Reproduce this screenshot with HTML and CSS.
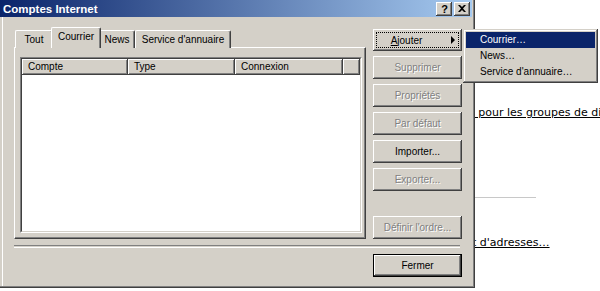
FILE: index.html
```html
<!DOCTYPE html>
<html lang="fr">
<head>
    <meta charset="UTF-8">
    <title>Comptes Internet</title>
    <link rel="stylesheet" href="styles.css">
</head>
<body>
    <!-- Page behind the dialog -->
    <div class="page">
        <p class="page-line first"><span class="link">e pour les groupes de di</span></p>
        <hr class="page-rule">
        <p class="page-line last"><span class="link">t d'adresses…</span></p>
    </div>

    <!-- The dialog window -->
    <div class="window">
        <div class="titlebar">
            <span class="title">Comptes Internet</span>
            <div class="caption-buttons">
                <span class="caption-btn help">?</span>
                <span class="caption-btn close">
                    <svg width="8" height="7" viewBox="0 0 8 7"><path d="M0 0h2l2 2 2-2h2L5 3.5 8 7H6L4 5 2 7H0l3-3.5z" fill="#000"/></svg>
                </span>
            </div>
        </div>

        <div class="client">
            <div class="main-row">
                <div class="tabs">
                    <div class="tab-strip">
                        <span class="tab tab-tout">Tout</span>
                        <span class="tab tab-courrier active">Courrier</span>
                        <span class="tab tab-news">News</span>
                        <span class="tab tab-service">Service d'annuaire</span>
                    </div>
                    <div class="tab-panel">
                        <div class="list">
                            <div class="list-inner">
                                <div class="list-header">
                                    <span class="col col-compte">Compte</span>
                                    <span class="col col-type">Type</span>
                                    <span class="col col-connexion">Connexion</span>
                                    <span class="col col-filler"></span>
                                </div>
                            </div>
                        </div>
                    </div>
                </div>

                <div class="actions">
                    <button class="btn btn-ajouter"><span class="focus-rect"><span class="btn-label"><u>A</u>jouter</span><span class="arrow"></span></span></button>
                    <button class="btn disabled">Supprimer</button>
                    <button class="btn disabled">Propriétés</button>
                    <button class="btn disabled">Par défaut</button>
                    <button class="btn">Importer...</button>
                    <button class="btn disabled">Exporter...</button>
                    <button class="btn disabled btn-bottom">Définir l'ordre...</button>
                </div>
            </div>

            <div class="separator"></div>

            <div class="footer">
                <button class="btn btn-default">Fermer</button>
            </div>
        </div>
    </div>

    <!-- Popup menu opened from "Ajouter" -->
    <div class="menu">
        <div class="menu-item selected">Courrier…</div>
        <div class="menu-item">News…</div>
        <div class="menu-item">Service d'annuaire…</div>
    </div>
</body>
</html>
```

FILE: styles.css
```css
/* Page */
body {
    margin: 0;
    width: 600px;
    height: 291px;
    overflow: hidden;
    background: #fff;
    font-family: "Liberation Sans", Arial, sans-serif;
    font-size: 10px;
    position: relative;
}

/* Web page behind the dialog */
.page {
    padding-top: 106px;
    font-family: "DejaVu Sans", Verdana, sans-serif;
    font-size: 11px;
    line-height: 13px;
    color: #000;
}

.page-line {
    margin: 0;
    white-space: nowrap;
}

.page-line.first {
    padding-left: 468px;
}

.page-line.last {
    margin-top: 38px;
    padding-left: 472px;
}

.link {
    text-decoration: underline;
}

.page-rule {
    margin: 78px 0 0 440px;
    width: 96px;
    height: 0;
    border: none;
    border-top: 1px solid #c8c8c8;
}

/* Dialog window */
.window {
    position: absolute;
    left: 0;
    top: 0;
    width: 475px;
    height: 288px;
    box-sizing: border-box;
    background: #d4d0c8;
    display: flex;
    flex-direction: column;
    box-shadow: inset -1px -1px #404040, inset -2px -2px #808080, inset 2px 0 #d4d0c8, inset 3px 0 #fff;
}

.titlebar {
    height: 18px;
    margin-right: 3px;
    padding: 0 2px 0 3px;
    display: flex;
    align-items: center;
    justify-content: space-between;
    background: linear-gradient(to right, #0a246a, #a6caf0);
}

.title {
    color: #fff;
    font-weight: bold;
    font-size: 11.5px;
}

.caption-buttons {
    display: flex;
    gap: 2px;
}

.caption-btn {
    width: 16px;
    height: 14px;
    box-sizing: border-box;
    display: flex;
    align-items: center;
    justify-content: center;
    background: #d4d0c8;
    font-weight: bold;
    font-size: 11px;
    box-shadow: inset -1px -1px #404040, inset 1px 1px #fff, inset -2px -2px #808080;
}

.caption-btn.help {
    padding-left: 1px;
}

.client {
    flex: 1;
    padding: 11px 13px 11px 14px;
    display: flex;
    flex-direction: column;
}

.main-row {
    height: 211px;
    display: flex;
    gap: 7px;
}

/* Tab control */
.tabs {
    width: 352px;
    display: flex;
    flex-direction: column;
}

.tab-strip {
    height: 20px;
    display: flex;
    align-items: flex-end;
    padding-left: 1px;
    position: relative;
    z-index: 1;
    margin-bottom: -1px;
}

.tab {
    height: 18px;
    box-sizing: border-box;
    padding: 3px 0 0;
    text-align: center;
    background: #d4d0c8;
    border-top: 1px solid #fff;
    border-left: 1px solid #fff;
    border-right: 1px solid #404040;
    border-top-left-radius: 2px;
    border-top-right-radius: 2px;
    box-shadow: inset -1px 0 #808080;
}

.tab-tout { width: 38px; }
.tab-courrier { width: 46px; }
.tab-news { width: 36px; }
.tab-service { width: 96px; }

.tab.active {
    height: 21px;
    width: 50px;
    margin: 0 -2px;
    padding-top: 3px;
    position: relative;
    z-index: 2;
}

.tab-panel {
    flex: 1;
    padding: 9px 3px 5px 5px;
    border-top: 1px solid #fff;
    border-left: 1px solid #fff;
    border-right: 1px solid #404040;
    border-bottom: 1px solid #404040;
    box-shadow: inset -1px -1px #808080;
    display: flex;
}

/* List view */
.list {
    flex: 1;
    border: 1px solid;
    border-color: #808080 #fff #fff #808080;
    display: flex;
}

.list-inner {
    flex: 1;
    background: #fff;
    border: 1px solid;
    border-color: #404040 #d4d0c8 #d4d0c8 #404040;
}

.list-header {
    height: 16px;
    display: flex;
}

.col {
    box-sizing: border-box;
    padding-left: 6px;
    line-height: 16px;
    background: #d4d0c8;
    box-shadow: inset -1px -1px #404040, inset 1px 1px #fff, inset -2px -2px #808080;
}

.col-compte { width: 106px; }
.col-type { width: 107px; }
.col-connexion { width: 108px; }
.col-filler { flex: 1; }

/* Buttons */
.actions {
    width: 89px;
    display: flex;
    flex-direction: column;
    gap: 5px;
}

.btn {
    width: 89px;
    height: 23px;
    padding: 0;
    border: none;
    background: #d4d0c8;
    font-family: "Liberation Sans", Arial, sans-serif;
    font-size: 10px;
    color: #000;
    box-shadow: inset -1px -1px #404040, inset 1px 1px #fff, inset -2px -2px #808080;
}

.btn.disabled {
    color: #808080;
    text-shadow: 1px 1px #fff;
}

.btn-bottom {
    margin-top: auto;
}

.btn-ajouter {
    height: 22px;
    margin-top: 1px;
    padding: 3px;
}

.focus-rect {
    height: 100%;
    box-sizing: border-box;
    display: flex;
    align-items: center;
    outline: 1px dotted #000;
    outline-offset: -1px;
}

.btn-label {
    flex: 1;
    text-align: center;
    padding-right: 14px;
}

.arrow {
    width: 0;
    height: 0;
    margin-right: 4px;
    border-left: 4px solid #000;
    border-top: 4px solid transparent;
    border-bottom: 4px solid transparent;
}

.separator {
    margin-top: 6px;
    height: 1px;
    width: 446px;
    border-top: 1px solid #808080;
    border-bottom: 1px solid #fff;
}

.footer {
    margin-top: 6px;
    display: flex;
    justify-content: flex-end;
}

.btn-default {
    box-shadow: inset 0 0 0 1px #000, inset -2px -2px #404040, inset 2px 2px #fff, inset -3px -3px #808080;
}

/* Popup menu */
.menu {
    position: absolute;
    left: 463px;
    top: 29px;
    width: 135px;
    height: 54px;
    box-sizing: border-box;
    padding: 3px;
    background: #d4d0c8;
    box-shadow: inset -1px -1px #404040, inset 1px 1px #d4d0c8, inset -2px -2px #808080, inset 2px 2px #fff;
}

.menu-item {
    height: 16px;
    line-height: 16px;
    padding-left: 14px;
    white-space: nowrap;
}

.menu-item.selected {
    background: #0a246a;
    color: #fff;
}
```
